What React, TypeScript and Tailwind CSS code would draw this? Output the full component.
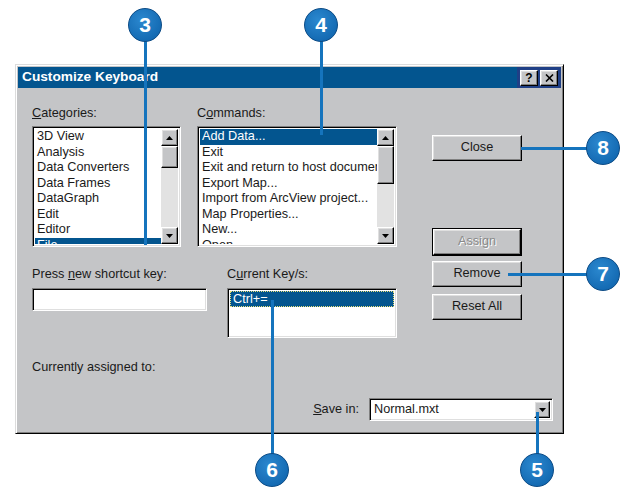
import React from 'react';

const raised =
  'border border-t-white border-l-white border-r-black border-b-black shadow-[inset_-1px_-1px_0_#808080,inset_1px_1px_0_#dfdfdf]';
const sunken =
  'border border-t-[#808080] border-l-[#808080] border-r-white border-b-white shadow-[inset_1px_1px_0_#000,inset_-1px_-1px_0_#dfdfdf]';

function Arrow({ up }: { up?: boolean }) {
  return (
    <svg width="7" height="4" viewBox="0 0 7 4">
      {up ? <polygon points="3.5,0 7,4 0,4" fill="#000" /> : <polygon points="0,0 7,0 3.5,4" fill="#000" />}
    </svg>
  );
}

function ScrollBar({ thumb }: { thumb: number }) {
  return (
    <div className="flex w-[17px] flex-col bg-[#e2e2e2]">
      <div className={`flex h-[17px] items-center justify-center bg-[#c4c5c7] ${raised}`}>
        <Arrow up />
      </div>
      <div className={`bg-[#c4c5c7] ${raised}`} style={{ height: thumb }} />
      <div className="flex-1" />
      <div className={`flex h-[17px] items-center justify-center bg-[#c4c5c7] ${raised}`}>
        <Arrow />
      </div>
    </div>
  );
}

function ListBox({
  items,
  selected,
  thumb,
}: {
  items: string[];
  selected: number;
  thumb: number;
}) {
  return (
    <div className={`mt-[5px] flex h-[121px] bg-white p-[2px] ${sunken}`}>
      <div className="flex-1 overflow-hidden">
        {items.map((item, i) => (
          <div
            key={item}
            className={`whitespace-nowrap pl-[2px] leading-[15.5px] ${
              i === selected ? 'bg-[#03558f] text-white' : ''
            }`}
          >
            {item}
          </div>
        ))}
      </div>
      <ScrollBar thumb={thumb} />
    </div>
  );
}

function Btn({ children, disabled }: { children: React.ReactNode; disabled?: boolean }) {
  return (
    <div
      className={`flex h-[26px] items-center justify-center bg-[#c4c5c7] ${raised} ${
        disabled ? 'text-[#8a8a8a] [text-shadow:1px_1px_0_#fff]' : ''
      }`}
    >
      {children}
    </div>
  );
}

function Callout({ n, className }: { n: number; className: string }) {
  return (
    <div
      className={`absolute flex size-[34px] items-center justify-center rounded-full border border-[#0a4a85] bg-[radial-gradient(circle_at_40%_35%,#2b88cf,#0b5fa8)] text-[21px] font-bold text-white ${className}`}
    >
      {n}
    </div>
  );
}

export default function App() {
  const categories = ['3D View', 'Analysis', 'Data Converters', 'Data Frames', 'DataGraph', 'Edit', 'Editor', 'File'];
  const commands = [
    'Add Data...',
    'Exit',
    'Exit and return to host document',
    'Export Map...',
    'Import from ArcView project...',
    'Map Properties...',
    'New...',
    'Open...',
  ];

  return (
    <div className="relative h-[490px] w-[621px] overflow-hidden bg-white pl-[15px] pt-[64px] font-['Liberation_Sans',Arial,sans-serif] text-[12.7px] text-[#1a1a1a]">
      {/* dialog */}
      <div className="h-[370px] w-[549px] border border-t-[#dcdcdc] border-l-[#dcdcdc] border-r-black border-b-black bg-[#c4c5c7] p-[2px] shadow-[inset_1px_1px_0_#fff,inset_-1px_-1px_0_#808080]">
        <div className="flex h-[21px] items-center justify-between bg-[#03558f] pl-[4px]">
          <span className="text-[13.7px] font-bold text-white">Customize Keyboard</span>
          <div className="flex h-full items-center gap-[2px] bg-[#1f3f86] px-[3px]">
            <div className={`flex h-[16px] w-[18px] items-center justify-center bg-[#c4c5c7] text-[12px] font-bold leading-none text-black ${raised}`}>
              ?
            </div>
            <div className={`flex h-[16px] w-[18px] items-center justify-center bg-[#c4c5c7] ${raised}`}>
              <svg width="9" height="8" viewBox="0 0 9 8">
                <path d="M1 0.5 L8 7.5 M8 0.5 L1 7.5" stroke="#000" strokeWidth="1.6" />
              </svg>
            </div>
          </div>
        </div>

        <div className="flex flex-col pl-[14px]">
          <div className="flex">
            {/* left block */}
            <div className="w-[365px]">
              <div className="flex gap-[16px] pt-[18px]">
                <div className="w-[149px]">
                  <div className="leading-[15px]">
                    <u>C</u>ategories:
                  </div>
                  <ListBox items={categories} selected={7} thumb={22} />
                </div>
                <div className="w-[200px]">
                  <div className="leading-[15px]">
                    C<u>o</u>mmands:
                  </div>
                  <ListBox items={commands} selected={0} thumb={38} />
                </div>
              </div>

              <div className="mt-[20px] flex">
                <div className="w-[175px]">
                  <div className="leading-[15px]">
                    Press <u>n</u>ew shortcut key:
                  </div>
                  <div className={`mt-[6px] h-[23px] bg-white ${sunken}`} />
                </div>
                <div className="ml-[20px] w-[170px]">
                  <div className="leading-[15px]">
                    C<u>u</u>rrent Key/s:
                  </div>
                  <div className={`mt-[6px] h-[50px] bg-white p-[2px] ${sunken}`}>
                    <div className="border border-dotted border-[#e8e07a] bg-[#03558f] pl-[2px] leading-[14px] text-white">
                      Ctrl+=
                    </div>
                  </div>
                </div>
              </div>

              <div className="mt-[22px] leading-[15px]">Currently assigned to:</div>
            </div>

            {/* buttons */}
            <div className="ml-[35px] flex w-[90px] flex-col">
              <div className="mt-[47px]">
                <Btn>Close</Btn>
              </div>
              <div className="mt-[67px] border border-black">
                <Btn disabled>Assign</Btn>
              </div>
              <div className="mt-[5px]">
                <Btn>Remove</Btn>
              </div>
              <div className="mt-[7px]">
                <Btn>Reset All</Btn>
              </div>
            </div>
          </div>

          <div className="mt-[23px] flex items-center justify-end pr-[8px]">
            <span className="mr-[10px]">
              <u>S</u>ave in:
            </span>
            <div className={`flex h-[23px] w-[184px] items-center bg-white p-[2px] ${sunken}`}>
              <span className="flex-1 pl-[2px]">Normal.mxt</span>
              <div className={`flex h-full w-[16px] items-center justify-center bg-[#c4c5c7] ${raised}`}>
                <Arrow />
              </div>
            </div>
          </div>
        </div>
      </div>

      {/* callout lines */}
      <div className="absolute left-[144px] top-[40px] h-[205px] w-[3px] bg-[#1574bd]" />
      <div className="absolute left-[320px] top-[40px] h-[95px] w-[3px] bg-[#1574bd]" />
      <div className="absolute left-[521px] top-[147px] h-[3px] w-[70px] bg-[#1574bd]" />
      <div className="absolute left-[508px] top-[273px] h-[3px] w-[85px] bg-[#1574bd]" />
      <div className="absolute left-[271px] top-[300px] h-[160px] w-[3px] bg-[#1574bd]" />
      <div className="absolute left-[536px] top-[412px] h-[48px] w-[3px] bg-[#1574bd]" />

      {/* callouts */}
      <Callout n={3} className="left-[128px] top-[8px]" />
      <Callout n={4} className="left-[304px] top-[8px]" />
      <Callout n={8} className="left-[586px] top-[131px]" />
      <Callout n={7} className="left-[586px] top-[257px]" />
      <Callout n={6} className="left-[255px] top-[453px]" />
      <Callout n={5} className="left-[520px] top-[453px]" />
    </div>
  );
}
